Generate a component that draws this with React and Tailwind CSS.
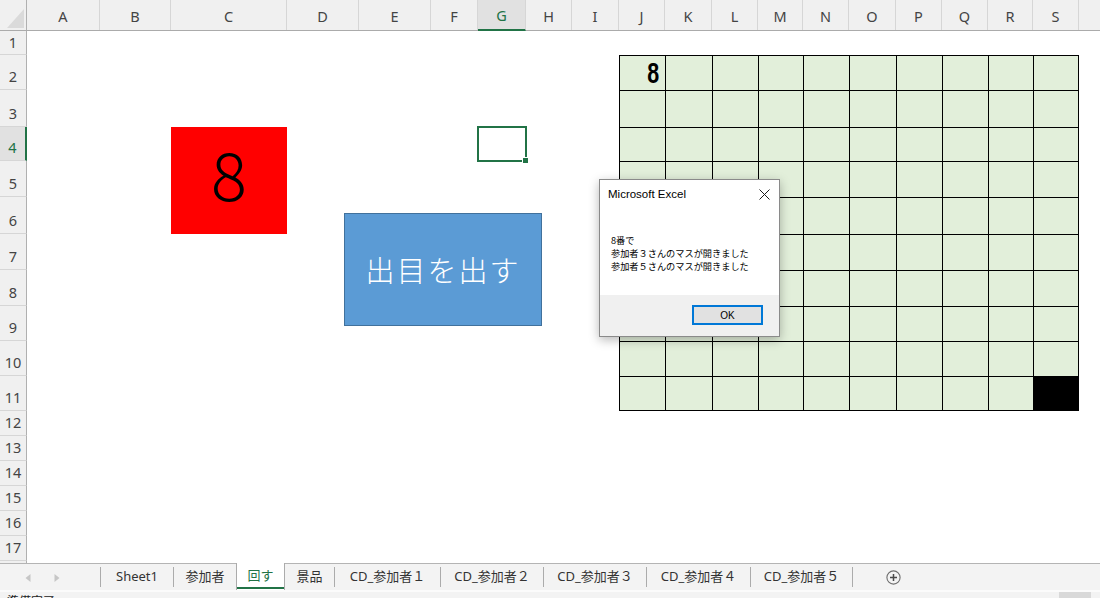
import React from "react";

const COLS = [
  ["A", "w-[73px]"], ["B", "w-[71px]"], ["C", "w-[116px]"], ["D", "w-[72px]"], ["E", "w-[72px]"],
  ["F", "w-[47px]"], ["G", "w-[48px]"], ["H", "w-[46px]"], ["I", "w-[47px]"], ["J", "w-[46px]"],
  ["K", "w-[47px]"], ["L", "w-[46px]"], ["M", "w-[45px]"], ["N", "w-[46px]"], ["O", "w-[47px]"],
  ["P", "w-[46px]"], ["Q", "w-[46px]"], ["R", "w-[45px]"], ["S", "w-[46px]"], ["", "w-[60px]"],
];

const ROWS = [
  ["1", "h-[24px]"], ["2", "h-[35px]"], ["3", "h-[37px]"], ["4", "h-[34px]"], ["5", "h-[36px]"],
  ["6", "h-[37px]"], ["7", "h-[36px]"], ["8", "h-[36px]"], ["9", "h-[35px]"], ["10", "h-[35px]"],
  ["11", "h-[35px]"], ["12", "h-[25px]"], ["13", "h-[25px]"], ["14", "h-[25px]"], ["15", "h-[25px]"],
  ["16", "h-[25px]"], ["17", "h-[25px]"], ["", "h-[25px]"],
];

const HDR = "font-[family-name:'Noto_Sans','Noto_Sans_CJK_JP',sans-serif]";
const JP = "font-[family-name:'Noto_Sans_CJK_JP',sans-serif]";

function Board() {
  const cells = [];
  for (let r = 0; r < 10; r++) {
    for (let c = 0; c < 10; c++) {
      const black = r === 9 && c === 9;
      cells.push(
        <div
          key={r + "-" + c}
          className={`border-l border-t border-black flex items-center justify-end pr-[6px] ${
            black ? "bg-black" : "bg-[#e2efda]"
          } ${c === 9 ? "border-r" : ""} ${r === 9 ? "border-b" : ""}`}
        >
          {r === 0 && c === 0 ? (
            <span className="inline-block origin-right scale-x-[0.74] text-[29px] leading-none font-bold text-black font-[family-name:'Liberation_Sans',sans-serif]">
              8
            </span>
          ) : null}
        </div>
      );
    }
  }
  return (
    <div className="col-start-10 col-span-10 row-start-2 row-span-10 grid grid-cols-[46px_47px_46px_45px_46px_47px_46px_46px_45px_46px] grid-rows-[35px_37px_34px_36px_37px_36px_36px_35px_35px_35px]">
      {cells}
    </div>
  );
}

function Dialog() {
  return (
    <div className="absolute left-[572px] top-[148px] w-[181px] h-[158px] bg-white border border-[#8a8a8a] shadow-[0_3px_10px_rgba(0,0,0,0.28)] flex flex-col z-10">
      <div className="h-[29px] flex items-center justify-between pl-[8px] pr-[9px]">
        <span className="text-[11.5px] text-black font-[family-name:'Liberation_Sans',sans-serif]">Microsoft Excel</span>
        <svg width="11" height="11" viewBox="0 0 11 11">
          <path d="M0.5 0.5 L10.5 10.5 M10.5 0.5 L0.5 10.5" stroke="#1a1a1a" strokeWidth="1" />
        </svg>
      </div>
      <div className={`flex-1 pl-[11px] pt-[25px] text-[9.2px] leading-[13px] text-black ${JP}`}>
        <div>8番で</div>
        <div>参加者３さんのマスが開きました</div>
        <div>参加者５さんのマスが開きました</div>
      </div>
      <div className="h-[41px] bg-[#f0f0f0] flex justify-end pt-[10px] pr-[16px]">
        <div className="w-[71px] h-[20px] border-2 border-[#0078d7] bg-[#e1e1e1] flex items-center justify-center text-[10px] text-black font-[family-name:'Liberation_Sans',sans-serif]">
          OK
        </div>
      </div>
    </div>
  );
}

function Sep() {
  return <div className="self-center w-px h-[20px] bg-[#ababab] shrink-0" />;
}

function Tab({ w, children }) {
  return (
    <div className={`${w} shrink-0 flex items-center justify-center text-[13px] text-[#333]`}>{children}</div>
  );
}

export default function App() {
  return (
    <div className={`w-[1100px] h-[598px] overflow-hidden flex flex-col bg-white ${HDR}`}>
      {/* column headers */}
      <div className="h-[31px] shrink-0 flex bg-[#f0f0f0] border-b border-[#ababab]">
        <div className="w-[27px] shrink-0 border-r border-[#b0b0b0]">
          <svg width="26" height="30" viewBox="0 0 26 30">
            <polygon points="24,9 24,28 7,28" fill="#dadada" />
          </svg>
        </div>
        {COLS.map(([l, w], i) => {
          const sel = l === "G";
          return (
            <div
              key={i}
              className={`${w} shrink-0 flex items-center justify-center pt-[3px] text-[14.5px] border-r border-[#d6d6d6] ${
                sel ? "bg-[#e1e1e1] text-[#217346] border-b-2 border-b-[#217346] -mb-px" : "text-[#444]"
              }`}
            >
              {l}
            </div>
          );
        })}
      </div>

      {/* body */}
      <div className="flex-1 min-h-0 flex overflow-hidden">
        <div className="w-[27px] shrink-0 flex flex-col bg-[#f0f0f0]">
          {ROWS.map(([n, h], i) => {
            const sel = n === "4";
            return (
              <div
                key={i}
                className={`${h} shrink-0 flex flex-col justify-end text-[14.5px] border-b border-[#d6d6d6] ${
                  sel
                    ? "bg-[#e1e1e1] text-[#217346] border-r-2 border-r-[#217346]"
                    : "text-[#444] border-r border-r-[#b0b0b0]"
                }`}
              >
                <div className="h-[24px] flex items-center justify-center">{n}</div>
              </div>
            );
          })}
        </div>

        <div className="flex-1 relative overflow-hidden">
          <div className="grid grid-cols-[73px_71px_116px_72px_72px_47px_48px_46px_47px_46px_47px_46px_45px_46px_47px_46px_46px_45px_46px_1fr] grid-rows-[24px_35px_37px_34px_36px_37px_36px_36px_35px_35px_35px_25px_25px_25px_25px_25px_25px_25px]">
            {/* red shape C4:C6 */}
            <div className="col-start-3 row-start-4 row-span-3 bg-[#ff0000] flex items-center justify-center">
              <span className={`text-[67px] leading-none font-light text-black -mt-[18px] ${JP}`}>8</span>
            </div>
            {/* selected cell G4 */}
            <div className="col-start-7 row-start-4 relative">
              <div className="absolute -inset-px border-2 border-[#217346]" />
              <div className="absolute -right-[3px] -bottom-[3px] w-[7px] h-[7px] bg-[#217346] border border-white" />
            </div>
            <Board />
          </div>

          {/* button shape */}
          <div className="absolute left-[317px] top-[182px] w-[198px] h-[113px] bg-[#5b9bd5] border border-[#41719c] flex items-center justify-center">
            <span className={`text-[29px] tracking-[2px] font-light text-white ${JP}`}>出目を出す</span>
          </div>

          <Dialog />
        </div>
      </div>

      {/* sheet tabs */}
      <div className={`h-[27px] shrink-0 flex bg-[#f3f3f3] border-t border-[#b4b4b4] ${HDR}`}>
        <div className="w-[100px] shrink-0 relative">
          <svg className="absolute left-[25px] top-[10px]" width="6" height="8" viewBox="0 0 6 8">
            <polygon points="5.5,0 5.5,8 0.5,4" fill="#c6c6c6" />
          </svg>
          <svg className="absolute left-[54px] top-[10px]" width="6" height="8" viewBox="0 0 6 8">
            <polygon points="0.5,0 0.5,8 5.5,4" fill="#c6c6c6" />
          </svg>
        </div>
        <Sep />
        <Tab w="w-[72px]">Sheet1</Tab>
        <Sep />
        <Tab w="w-[62px]">参加者</Tab>
        <div className="w-[49px] shrink-0 -mt-px bg-white border-x border-[#ababab] flex flex-col">
          <div className="flex-1 flex items-center justify-center text-[13px] text-[#217346] pt-[1px]">回す</div>
          <div className="h-[2px] bg-[#217346] mb-[1px]" />
        </div>
        <Tab w="w-[49px]">景品</Tab>
        <Sep />
        <Tab w="w-[105px]">CD_参加者１</Tab>
        <Sep />
        <Tab w="w-[102px]">CD_参加者２</Tab>
        <Sep />
        <Tab w="w-[102px]">CD_参加者３</Tab>
        <Sep />
        <Tab w="w-[103px]">CD_参加者４</Tab>
        <Sep />
        <Tab w="w-[101px]">CD_参加者５</Tab>
        <Sep />
        <div className="ml-[33px] self-center">
          <svg width="15" height="15" viewBox="0 0 15 15">
            <circle cx="7.5" cy="7.5" r="6.6" fill="none" stroke="#6e6e6e" strokeWidth="1.1" />
            <path d="M7.5 4 V11 M4 7.5 H11" stroke="#4a4a4a" strokeWidth="1.5" />
          </svg>
        </div>
      </div>
      <div className="h-[2px] shrink-0 bg-[#fbfbfb]" />
      {/* status bar */}
      <div className="h-[6px] shrink-0 bg-[#f3f3f3] flex overflow-hidden">
        <div className={`pl-[7px] pt-[2px] text-[12px] leading-[14px] text-[#222] ${JP}`}>準備完了</div>
        <div className="ml-auto mr-[9px] w-[32px] h-full bg-[#d9d9d9]" />
      </div>
    </div>
  );
}
